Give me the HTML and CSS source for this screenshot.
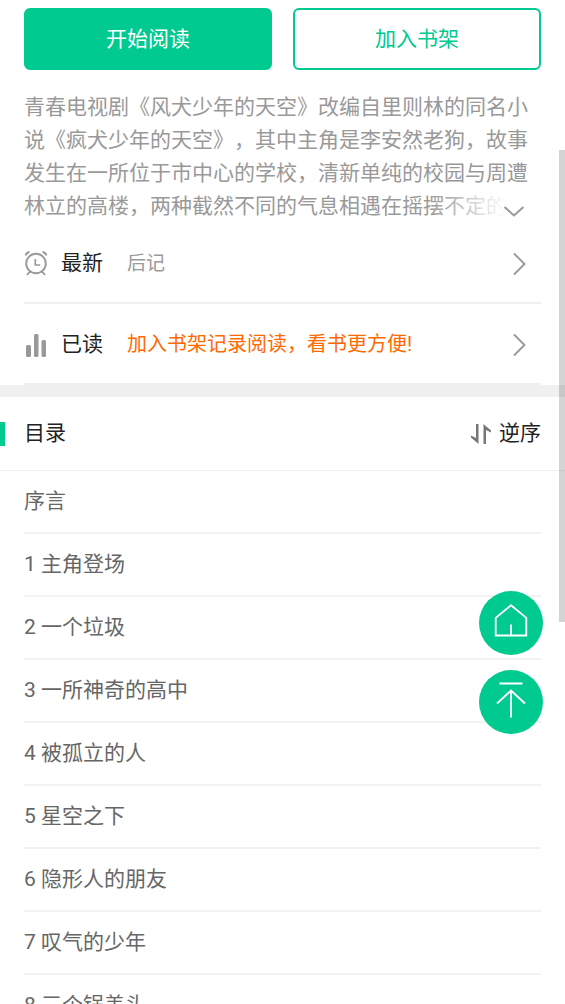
FILE: index.html
```html
<!DOCTYPE html>
<html lang="zh-CN">
<head>
<meta charset="utf-8">
<meta name="viewport" content="width=device-width, initial-scale=1">
<title>目录</title>
<link rel="stylesheet" href="styles.css">
</head>
<body>
<main class="page">
  <div class="actions">
    <button class="btn btn-primary" type="button">开始阅读</button>
    <button class="btn btn-outline" type="button">加入书架</button>
  </div>

  <section class="intro">
    <p class="intro-text">青春电视剧《风犬少年的天空》改编自里则林的同名小说《疯犬少年的天空》，其中主角是李安然老狗，故事发生在一所位于市中心的学校，清新单纯的校园与周遭林立的高楼，两种截然不同的气息相遇在摇摆不定的</p>
    <button class="intro-more" type="button" aria-label="展开简介">
      <svg width="22" height="14" viewBox="0 0 22 14" fill="none" stroke="#999" stroke-width="2"><path d="M1.500 2 11 10.500 20.500 2"/></svg>
    </button>
  </section>

  <nav class="info">
    <a class="info-row" href="#latest">
      <svg class="info-icon" width="24" height="26" viewBox="0 0 24 26" fill="none" stroke="#999" stroke-width="2"><circle cx="12" cy="12.500" r="9.800" stroke-width="1.900"/><path d="M11.300 8v6h5" stroke-width="1.700"/><path d="M1.500 4.500Q2.500 1.500 5.500 1M22.500 4.500Q21.500 1.500 18.500 1M6 20.500 3 24M18 20.500 21 24" stroke-width="1.900"/></svg>
      <span class="info-label">最新</span>
      <span class="info-value">后记</span>
      <svg class="info-arrow" width="14" height="24" viewBox="0 0 14 24" fill="none" stroke="#999" stroke-width="1.900"><path d="M1 1.500 11.500 12 1 22.500"/></svg>
    </a>
    <a class="info-row" href="#history">
      <svg class="info-icon" width="24" height="26" viewBox="0 0 24 26" fill="#999"><rect x="2" y="13" width="5" height="12" rx="1.500"/><rect x="10" y="2" width="4.500" height="23" rx="1.500"/><rect x="17.500" y="8" width="4.500" height="17" rx="1.500"/></svg>
      <span class="info-label">已读</span>
      <span class="info-value info-tip">加入书架记录阅读，看书更方便!</span>
      <svg class="info-arrow" width="14" height="24" viewBox="0 0 14 24" fill="none" stroke="#999" stroke-width="1.900"><path d="M1 1.500 11.500 12 1 22.500"/></svg>
    </a>
  </nav>

  <section class="catalog">
    <header class="catalog-head">
      <h2 class="catalog-title">目录</h2>
      <button class="sort" type="button">
        <svg width="20" height="20" viewBox="0 0 20 20" fill="#777"><path d="M5 0H7.500V20L0 13.500V11.500L5 14ZM12.500 20V0L20 6.500V8.500L15 6V20Z"/></svg>
        逆序
      </button>
    </header>
    <ul class="chapters">
      <li><a class="chapter" href="#c0">序言</a></li>
      <li><a class="chapter" href="#c1">1 主角登场</a></li>
      <li><a class="chapter" href="#c2">2 一个垃圾</a></li>
      <li><a class="chapter" href="#c3">3 一所神奇的高中</a></li>
      <li><a class="chapter" href="#c4">4 被孤立的人</a></li>
      <li><a class="chapter" href="#c5">5 星空之下</a></li>
      <li><a class="chapter" href="#c6">6 隐形人的朋友</a></li>
      <li><a class="chapter" href="#c7">7 叹气的少年</a></li>
      <li><a class="chapter" href="#c8">8 三个锅盖头</a></li>
    </ul>
  </section>
</main>

<div class="float-tools">
  <a class="float-btn" href="#home" aria-label="首页">
    <svg width="64" height="64" viewBox="0 0 64 64" fill="none" stroke="#fff" stroke-width="1.800"><path d="M16.700 44.500V26.800L32 14.200 47.300 26.800V44.500ZM32 44.500V33.500"/></svg>
  </a>
  <a class="float-btn" href="#top" aria-label="返回顶部">
    <svg width="64" height="64" viewBox="0 0 64 64" fill="none" stroke="#fff" stroke-width="1.800"><path d="M20.500 13.500H43.500M32 47.500V20M18 33.500 32 20.500 46 33.500"/></svg>
  </a>
</div>
<div class="scroll-thumb"></div>
</body>
</html>
```
FILE: styles.css
```css
* {
  box-sizing: border-box;
}

body {
  margin: 0;
  background: #fff;
  color: #222;
  font: 21px/33px Roboto, "Noto Sans CJK SC", sans-serif;
  text-spacing-trim: space-all;
  overflow: hidden;
}

a {
  color: inherit;
  text-decoration: none;
}

button {
  font: inherit;
  color: inherit;
  background: none;
  border: 0;
  padding: 0;
}

svg {
  display: block;
  flex: none;
}

.page {
  height: 100vh;
  overflow-y: auto;
  scrollbar-width: none;
}

.actions {
  display: grid;
  grid-template-columns: 1fr 1fr;
  gap: 21px;
  padding: 8px 24px 0;
}

.btn {
  height: 62px;
  border: 2px solid #00ca90;
  border-radius: 6px;
  color: #00ca90;
}

.btn-primary {
  background: #00ca90;
  color: #fff;
}

.intro {
  position: relative;
  margin: 21px 24px 0;
  color: #999;
}

.intro-text {
  margin: 0;
  height: 132px;
  overflow: hidden;
}

.intro-more {
  position: absolute;
  right: 0;
  bottom: 0;
  display: flex;
  justify-content: flex-end;
  align-items: center;
  width: 112px;
  height: 33px;
  padding: 10px 16px 0 0;
  background: linear-gradient(to right, rgba(255, 255, 255, 0), #fff 70%);
}

.info {
  padding: 0 24px;
}

.info-row {
  display: flex;
  align-items: center;
  height: 81px;
  padding-top: 2px;
  border-bottom: 2px solid #f0f0f0;
}

.info-label {
  margin-left: 13px;
}

.info-value {
  flex: 1;
  margin-left: 24px;
  font-size: 19px;
  color: #999;
}

.info-tip {
  font-size: 20px;
  color: #ff6a00;
}

.info-arrow {
  margin-right: 14px;
}

.catalog {
  border-top: 12px solid #f0f0f0;
}

.catalog-head {
  display: flex;
  justify-content: space-between;
  align-items: center;
  height: 74px;
  padding-right: 24px;
  border-bottom: 1px solid #f0f0f0;
}

.catalog-title {
  display: flex;
  align-items: center;
  gap: 19px;
  margin: 0;
  font-size: 21px;
  font-weight: 400;
}

.catalog-title::before {
  content: "";
  width: 5px;
  height: 24px;
  background: #00ca90;
}

.sort {
  display: flex;
  align-items: center;
  gap: 8px;
}

.chapters {
  margin: 0;
  padding: 0 24px;
  list-style: none;
}

.chapter {
  display: block;
  height: 63px;
  padding: 14px 0;
  border-bottom: 2px solid #f2f2f2;
  color: #666;
}

.float-tools {
  position: fixed;
  right: 22px;
  top: 591px;
  display: grid;
  gap: 15px;
}

.float-btn {
  width: 64px;
  height: 64px;
  border-radius: 50%;
  background: #00ca90;
}

.scroll-thumb {
  position: fixed;
  right: 0;
  top: 150px;
  width: 6px;
  height: 472px;
  background: rgba(0, 0, 0, 0.17);
}
```
